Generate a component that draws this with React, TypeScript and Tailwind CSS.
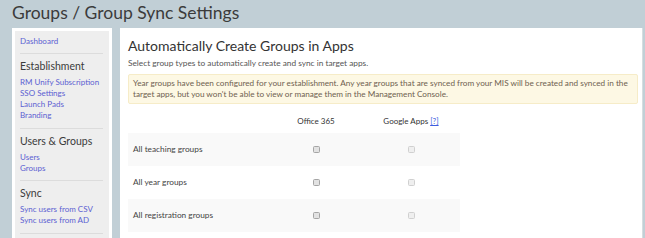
import React from "react";

const sections = [
  { title: "Establishment", links: ["RM Unify Subscription", "SSO Settings", "Launch Pads", "Branding"] },
  { title: "Users & Groups", links: ["Users", "Groups"] },
  { title: "Sync", links: ["Sync users from CSV", "Sync users from AD"] },
];

const rows = ["All teaching groups", "All year groups", "All registration groups"];

function Box({ disabled }: { disabled?: boolean }) {
  return (
    <span
      className={
        disabled
          ? "inline-block w-[7px] h-[7px] rounded-[1.5px] border border-[#d0d0d0] bg-[#efefef]"
          : "inline-block w-[7px] h-[7px] rounded-[1.5px] border border-[#a5a5a5] bg-[#e2e2e2]"
      }
    />
  );
}

export default function App() {
  return (
    <div className="h-screen bg-[#c1cfd6] font-['Lato',sans-serif] text-[#333] overflow-hidden">
      <h1 className="h-[28px] pl-[12px] text-[17.5px] leading-[26px] text-[#3b3b3b]">
        Groups / Group Sync Settings
      </h1>
      <div className="flex gap-[8px] pl-[12px] pr-[2px]">
        <aside className="w-[100px] shrink-0 border-[3px] border-white bg-[#eeeeee] pl-[5px] pr-[6px] pt-[5px]">
          <a className="block text-[8px] leading-[11px] text-[#5c5fd2]">Dashboard</a>
          <div className="mt-[6px] border-t border-[#dcdcdc]" />
          {sections.map((s) => (
            <div key={s.title}>
              <div className="mt-[6px] text-[10.5px] leading-[13px] text-[#3b3b3b] whitespace-nowrap">{s.title}</div>
              <div className="mt-[4px]">
                {s.links.map((l) => (
                  <a key={l} className="block text-[8px] leading-[11px] text-[#5c5fd2] whitespace-nowrap">
                    {l}
                  </a>
                ))}
              </div>
              <div className="mt-[6.5px] border-t border-[#dcdcdc]" />
            </div>
          ))}
        </aside>
        <main className="flex-1 bg-white border-r border-[#d6dde0] pl-[8px] pr-[4px] pt-[10px] pb-4">
          <h2 className="text-[14px] leading-[16px] text-[#333]">Automatically Create Groups in Apps</h2>
          <p className="mt-[4px] text-[8.3px] leading-[11px] text-[#555]">
            Select group types to automatically create and sync in target apps.
          </p>
          <div className="mt-[5px] rounded-[2px] border border-[#f6ecc8] bg-[#fdf8e4] px-[4px] py-[3px] text-[8.2px] leading-[11px] text-[#6f6150] whitespace-nowrap">
            Year groups have been configured for your establishment. Any year groups that are synced from your MIS will be
            created and synced in the
            <br />
            target apps, but you won't be able to view or manage them in the Management Console.
          </div>
          <div className="mt-[5px] w-[332px]">
            <div className="flex h-[24px] items-center text-[8px] text-[#333]">
              <div className="w-[142px]" />
              <div className="w-[92px] text-center">Office 365</div>
              <div className="w-[98px] text-center">
                Google Apps <a className="text-[#3d5de0] underline">[?]</a>
              </div>
            </div>
            {rows.map((r, i) => (
              <div
                key={r}
                className={
                  i % 2 === 0
                    ? "flex h-[33px] items-center bg-[#f9f9f9] text-[8.3px] text-[#444]"
                    : "flex h-[33px] items-center bg-white text-[8.3px] text-[#444]"
                }
              >
                <div className="w-[142px] pl-[5px]">{r}</div>
                <div className="w-[92px] flex justify-center">
                  <Box />
                </div>
                <div className="w-[98px] flex justify-center">
                  <Box disabled />
                </div>
              </div>
            ))}
          </div>
        </main>
      </div>
    </div>
  );
}
